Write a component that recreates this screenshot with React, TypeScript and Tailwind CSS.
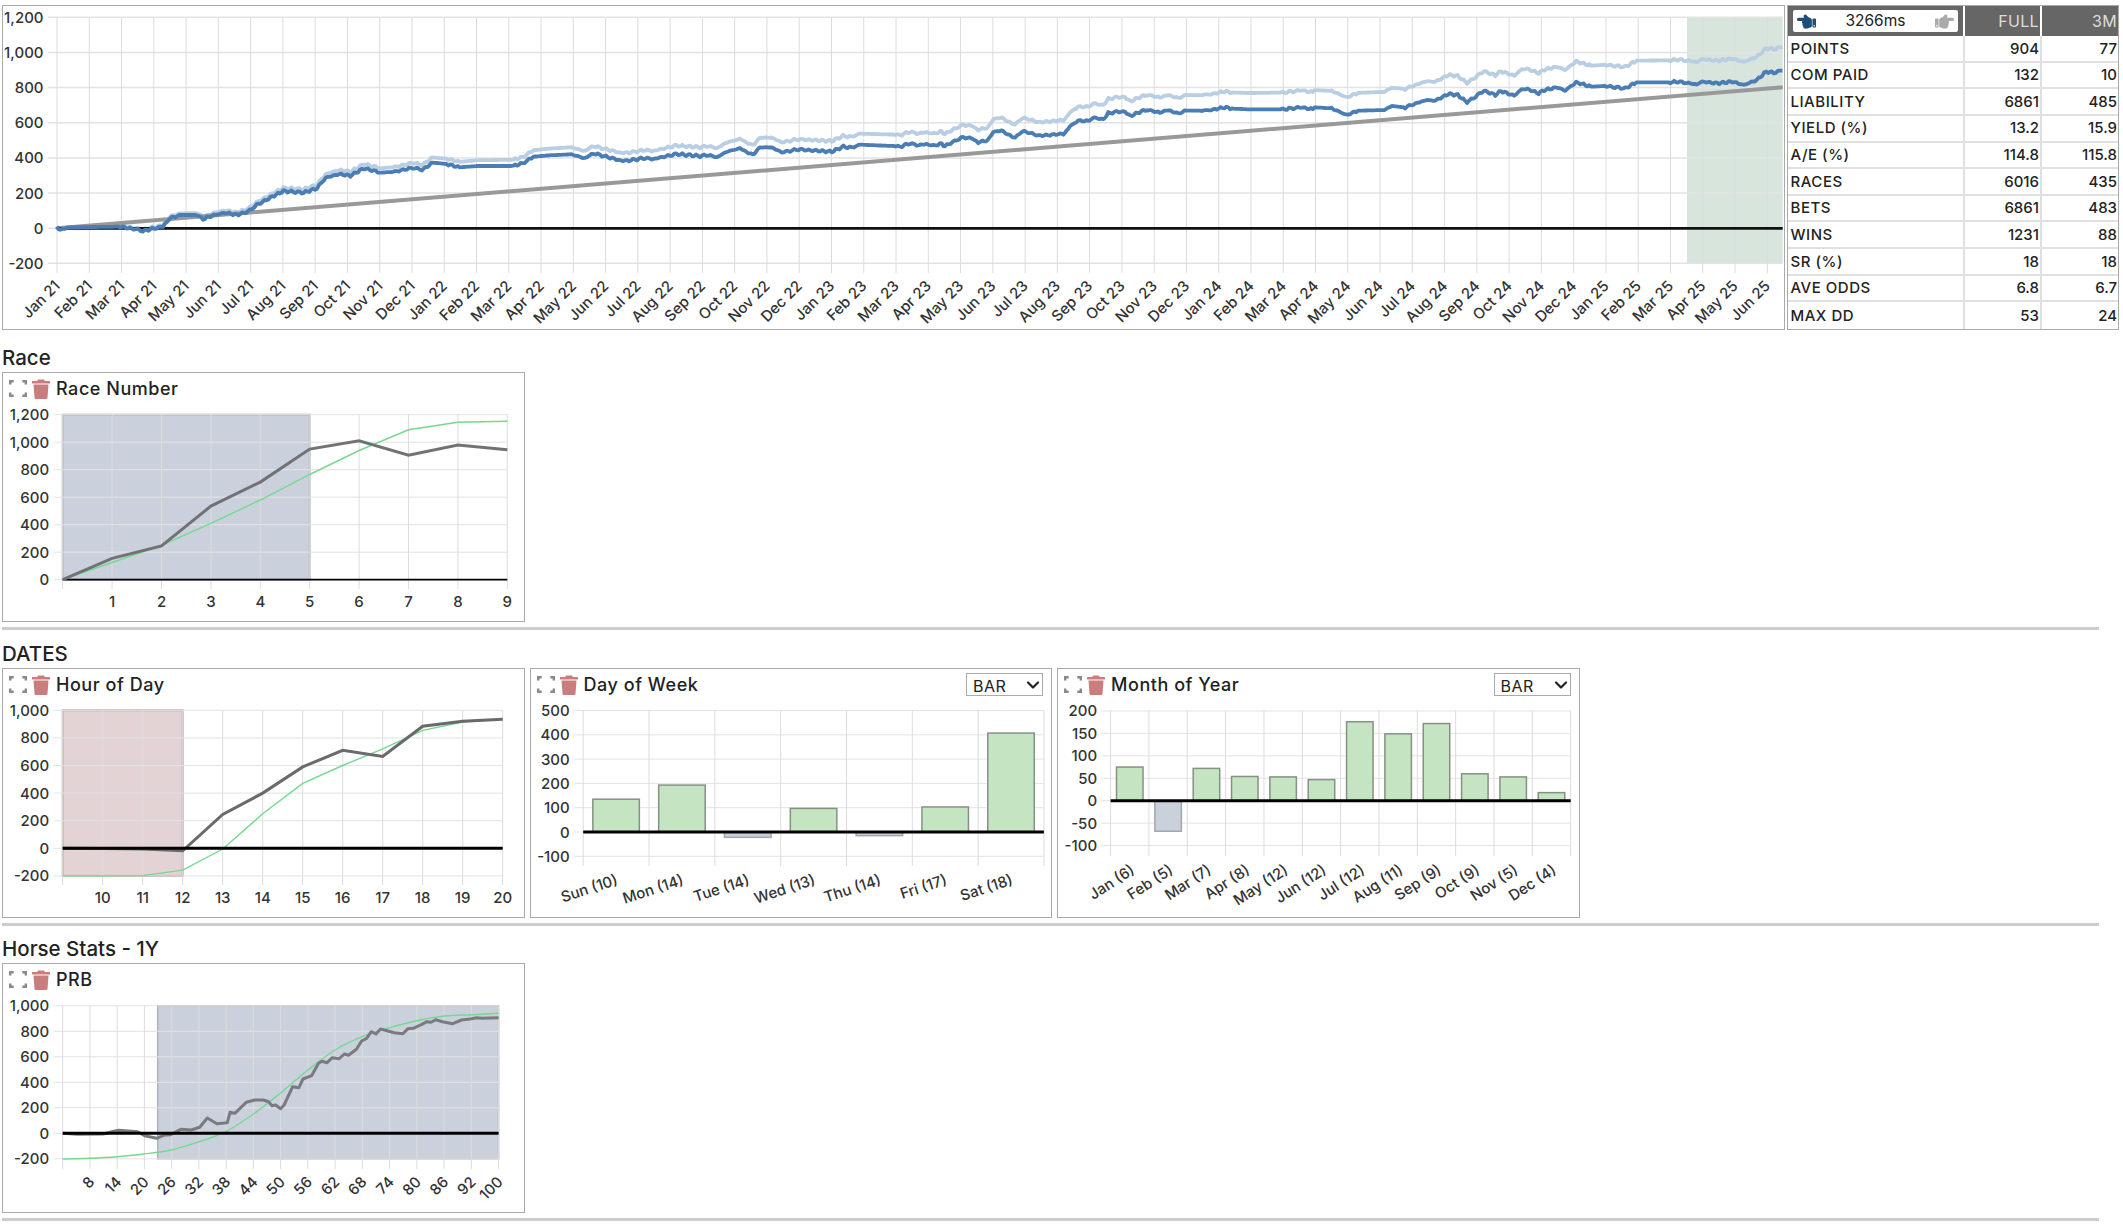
import React from "react";
import { FaHandPointLeft, FaHandPointRight } from "react-icons/fa";
import { ChevronDown } from "lucide-react";

type P = [number, number];

const GRID = "#e3e3e3";
const TXT = "#333";

function line(pts: P[]) {
  return pts.map((p) => `${p[0].toFixed(1)},${p[1].toFixed(1)}`).join(" ");
}

function smooth(pts: P[]) {
  let d = `M${pts[0][0]} ${pts[0][1]}`;
  for (let i = 0; i < pts.length - 1; i++) {
    const p0 = pts[Math.max(0, i - 1)];
    const p1 = pts[i];
    const p2 = pts[i + 1];
    const p3 = pts[Math.min(pts.length - 1, i + 2)];
    const c1: P = [p1[0] + (p2[0] - p0[0]) / 6, p1[1] + (p2[1] - p0[1]) / 6];
    const c2: P = [p2[0] - (p3[0] - p1[0]) / 6, p2[1] - (p3[1] - p1[1]) / 6];
    d += ` C${c1[0].toFixed(1)} ${c1[1].toFixed(1)} ${c2[0].toFixed(1)} ${c2[1].toFixed(1)} ${p2[0].toFixed(1)} ${p2[1].toFixed(1)}`;
  }
  return d;
}

type AxesProps = {
  left: number;
  right: number;
  ys: number[];
  ylabels: string[];
  xs: number[];
  top: number;
  tickEnd: number;
  hw?: number;
};

function Axes({ left, right, ys, ylabels, xs, top, tickEnd, hw = 1 }: AxesProps) {
  return (
    <g>
      {ys.map((y, i) => (
        <g key={i}>
          <line x1={left - 9} x2={right} y1={y} y2={y} stroke={GRID} strokeWidth={hw} />
          <text x={left - 13.5} y={y} textAnchor="end" dominantBaseline="central" fontSize={15} fontWeight={500} fill={TXT}>
            {ylabels[i]}
          </text>
        </g>
      ))}
      {xs.map((x, i) => (
        <line key={i} x1={x} x2={x} y1={top} y2={tickEnd} stroke="#dcdcdc" strokeWidth={1} />
      ))}
    </g>
  );
}

function Labels({ items, rot, size = 15 }: { items: { x: number; y: number; t: string }[]; rot: number; size?: number }) {
  return (
    <g>
      {items.map((l, i) => (
        <text
          key={i}
          x={l.x}
          y={l.y}
          fontSize={size}
          fontWeight={500}
          fill={TXT}
          dominantBaseline="central"
          textAnchor={rot === 0 ? "middle" : "end"}
          transform={rot === 0 ? undefined : `rotate(${rot} ${l.x} ${l.y})`}
        >
          {l.t}
        </text>
      ))}
    </g>
  );
}

function ExpandIcon() {
  return (
    <svg width="18" height="17" viewBox="0 0 18 17" className="shrink-0" fill="none" stroke="#858a90" strokeWidth="2.4">
      <path d="M1.2 4.5V1.2h3.5M13.3 1.2h3.5v3.3M16.8 12.5v3.3h-3.5M4.7 15.8H1.2v-3.3" />
    </svg>
  );
}

function TrashIcon() {
  return (
    <svg width="18" height="20" viewBox="0 0 18 20" className="shrink-0 ml-[5px]" fill="#c97d7d">
      <path d="M6 0.5h6l1 2H5z" />
      <rect x="0" y="2" width="18" height="2.5" rx="0.6" />
      <path d="M1.5 5.5h15l-1 13.2a1.3 1.3 0 0 1-1.3 1.3H3.8a1.3 1.3 0 0 1-1.3-1.3z" />
    </svg>
  );
}

function Panel({
  title,
  px,
  py,
  select,
  children,
}: {
  title: string;
  px: number;
  py: number;
  select?: boolean;
  children: React.ReactNode;
}) {
  return (
    <div className="w-[522.5px] h-[250px] shrink-0 border border-[#aaa] bg-white">
      <div className="flex items-center h-[33px] pb-[2px] pl-[6px] pr-[8px]">
        <ExpandIcon />
        <TrashIcon />
        <span className="ml-[6px] text-[18px] font-medium tracking-[0.03em] text-[#222]">{title}</span>
        {select && (
          <div className="ml-auto relative w-[77px] h-[23px]">
            <select className="appearance-none w-full h-full border border-[#aaa] bg-white pl-[6px] text-[16px] text-[#222] tracking-[0.03em]" defaultValue="BAR">
              <option>BAR</option>
              <option>LINE</option>
            </select>
            <ChevronDown size={20} strokeWidth={2.6} className="absolute right-0 top-[2px] text-[#222] pointer-events-none" />
          </div>
        )}
      </div>
      <svg width="520" height="215" viewBox={`${px + 1} ${py + 34} 520 215`} className="block">
        {children}
      </svg>
    </div>
  );
}

function Section({ title, cls, children }: { title: string; cls: string; children: React.ReactNode }) {
  return (
    <section className={cls}>
      <h2 className="h-[37px] flex items-end pb-[4px] pl-[2px] text-[20.5px] leading-[20px] font-medium text-[#222]">{title}</h2>
      <div className="flex gap-[5px] pl-[2px]">{children}</div>
      <div className="ml-[2px] mt-[5px] w-[2097px] h-[3px] bg-[#ccc]" />
    </section>
  );
}

/* ---------- main equity chart ---------- */
const z1: P[] = [[127,680],[135,690],[155,682],[270,680],[300,687],[320,693],[345,685],[365,680],[380,655],[405,645],[440,645],[455,657],[480,645],[505,638],[530,645],[555,635],[575,615],[610,590],[635,573],[680,578],[710,565],[730,533],[760,522],[785,527],[815,505],[855,518],[885,515],[925,503],[945,510],[970,488],[1000,492],[1030,502],[1070,498],[1150,498],[1175,488],[1195,470],[1230,466],[1280,463],[1310,475],[1330,460],[1380,478],[1400,483],[1445,474],[1460,478],[1515,462],[1568,468]];
const z10: P[] = [[25,345],[50,352],[80,335],[120,325],[158,345],[180,322],[215,322],[245,337],[295,328],[320,330],[395,335],[430,320],[455,323],[480,314],[580,318],[600,320],[630,310],[650,316],[680,312],[700,318],[720,310],[735,318],[770,300],[790,292],[815,295],[835,307],[865,300],[880,275],[905,272],[935,290],[945,292],[965,275],[985,277],[1015,287],[1050,285],[1080,282],[1095,280],[1110,258],[1135,242],[1165,243],[1180,233],[1210,238],[1225,220],[1250,215],[1275,215],[1290,228],[1330,212],[1345,210],[1380,218],[1400,210],[1435,220],[1460,212],[1500,212]];
const z11: P[] = [[30,240],[65,232],[90,236],[130,238],[220,238],[270,232],[300,238],[305,232],[350,235],[390,255],[420,242],[490,240],[510,228],[545,232],[600,210],[625,212],[660,192],[685,195],[710,217],[755,182],[785,195],[800,183],[835,197],[855,178],[870,177],[900,190],[915,180],[950,172],[970,182],[1000,157],[1040,170],[1075,168],[1130,175],[1160,157],[1250,157],[1270,155],[1320,163],[1335,155],[1375,160],[1415,155],[1445,165],[1480,150],[1505,125],[1525,128],[1548,122]];

const mainKeys: P[] = [
  ...z1.map((p): P => [p[0] / 2.24, p[1] / 3]),
  ...z10.map((p): P => [700 + p[0] / 3, 40 + p[1] / 3]),
  ...z11.map((p): P => [1200 + p[0] / 2.658, 30 + p[1] / 3]),
];

function buildMain() {
  const out: P[] = [];
  for (let i = 0; i < mainKeys.length - 1; i++) {
    const a = mainKeys[i];
    const b = mainKeys[i + 1];
    const n = Math.max(1, Math.round((b[0] - a[0]) / 2));
    const flat = Math.abs(b[1] - a[1]) < 1.6 && b[0] - a[0] > 12;
    for (let j = 0; j < n; j++) {
      const x = a[0] + ((b[0] - a[0]) * j) / n;
      const y = a[1] + ((b[1] - a[1]) * j) / n;
      const noise = flat ? 0 : Math.sin(x * 0.9) * 0.7 + Math.sin(x * 2.3) * 0.5;
      out.push([x, y + noise]);
    }
  }
  out.push(mainKeys[mainKeys.length - 1]);
  return out;
}
const mainDark = buildMain();
const mainLight: P[] = mainDark.map((p): P => [p[0], p[1] - ((p[0] - 57) / 1725.7) * 23.6]);

const MONTHS = ["Jan","Feb","Mar","Apr","May","Jun","Jul","Aug","Sep","Oct","Nov","Dec"];
const mainTicks: { x: number; tick: number; y: number; t: string }[] = [];
for (let i = 0; i < 54; i++) {
  const tick = 57 + i * 32.27;
  mainTicks.push({ tick, x: tick, y: 283, t: `${MONTHS[i % 12]} ${21 + Math.floor(i / 12)}` });
}

function MainChart() {
  const ys = [0, 1, 2, 3, 4, 5, 6, 7].map((i) => 17.3 + i * 35.15);
  const xs = mainTicks.map((t) => t.tick);
  return (
    <svg width="1781" height="323" viewBox="3 6 1781 323" className="block">
      <rect x={1687} y={17.3} width={95.7} height={246} fill="#d8e5dd" />
      <Axes left={57} right={1782.7} ys={ys} ylabels={["1,200","1,000","800","600","400","200","0","-200"]} xs={xs} top={17.3} tickEnd={273} hw={1.5} />
      <Labels items={mainTicks} rot={-45} />
      <polyline points={line(mainLight)} fill="none" stroke="#b9cde3" strokeWidth={3.8} strokeLinejoin="round" />
      <line x1={57} y1={228.3} x2={1782.7} y2={87.3} stroke="#999" strokeWidth={4} />
      <line x1={57} y1={228.3} x2={1782.7} y2={228.3} stroke="#111" strokeWidth={2.8} />
      <polyline points={line(mainDark)} fill="none" stroke="#4a7db3" strokeWidth={3.8} strokeLinejoin="round" />
    </svg>
  );
}

/* ---------- stats table ---------- */
const STATS: [string, string, string][] = [
  ["POINTS","904","77"],["COM PAID","132","10"],["LIABILITY","6861","485"],["YIELD (%)","13.2","15.9"],
  ["A/E (%)","114.8","115.8"],["RACES","6016","435"],["BETS","6861","483"],["WINS","1231","88"],
  ["SR (%)","18","18"],["AVE ODDS","6.8","6.7"],["MAX DD","53","24"],
];

function StatsTable() {
  return (
    <div className="ml-[2px] w-[332px] h-[325px] border border-[#aaa] grid grid-cols-[177px_77px_76px] grid-rows-[30px_repeat(11,1fr)] text-[15px] font-medium text-[#222]">
      <div className="bg-[#666] border-r-2 border-white p-[4px_5px] flex">
        <div className="flex-1 bg-white rounded-[2px] flex items-center justify-between px-[4px]">
          <FaHandPointLeft className="text-[#1f4e79] text-[19px]" />
          <span className="font-normal text-[15.5px] text-[#222]">3266ms</span>
          <FaHandPointRight className="text-[#aaa] text-[19px]" />
        </div>
      </div>
      <div className="bg-[#666] border-r-2 border-white text-[#ddd] text-[16px] tracking-[0.02em] font-normal text-right pr-[1px] leading-[30px]">FULL</div>
      <div className="bg-[#666] text-[#ddd] text-[16px] tracking-[0.02em] font-normal text-right pr-[1px] leading-[30px]">3M</div>
      {STATS.map((r, i) => (
        <React.Fragment key={r[0]}>
          <div className={`border-r-2 border-[#e0e0e0] pl-[2.5px] pt-[1px] flex items-center tracking-[0.035em] ${i < 10 ? "border-b-2" : ""}`}>{r[0]}</div>
          <div className={`border-r-2 border-[#e0e0e0] pr-[1px] pt-[1px] flex items-center justify-end ${i < 10 ? "border-b-2" : ""}`}>{r[1]}</div>
          <div className={`border-[#e0e0e0] pr-[1px] pt-[1px] flex items-center justify-end ${i < 10 ? "border-b-2" : ""}`}>{r[2]}</div>
        </React.Fragment>
      ))}
    </div>
  );
}

/* ---------- race number ---------- */
function RaceChart() {
  const X = (i: number) => 62.7 + i * 49.4;
  const Y = (v: number) => 579.7 - (v / 200) * 27.5;
  const ys = [1200,1000,800,600,400,200,0].map(Y);
  const xs = [0,1,2,3,4,5,6,7,8,9].map(X);
  const dark = [0,155,245,535,710,950,1010,905,980,945].map((v, i): P => [X(i), Y(v)]);
  const green = [0,125,250,410,580,765,940,1090,1145,1152].map((v, i): P => [X(i), Y(v)]);
  return (
    <>
      <rect x={X(0)} y={Y(1200)} width={X(5) - X(0)} height={Y(0) - Y(1200)} fill="#cbd1dc" stroke="#b0b4ba" strokeWidth={2} />
      <Axes left={62.7} right={507.3} ys={ys} ylabels={["1,200","1,000","800","600","400","200","0"]} xs={xs} top={Y(1200)} tickEnd={589} />
      <Labels items={xs.slice(1).map((x, i) => ({ x, y: 601.7, t: String(i + 1) }))} rot={0} />
      <polyline points={line(green)} fill="none" stroke="#74d98f" strokeWidth={1.4} />
      <line x1={X(0)} x2={X(9)} y1={Y(0)} y2={Y(0)} stroke="#000" strokeWidth={1.8} />
      <polyline points={line(dark)} fill="none" stroke="#727276" strokeWidth={3} />
    </>
  );
}

/* ---------- hour of day ---------- */
function HourChart() {
  const X = (i: number) => 62.7 + i * 40;
  const Y = (v: number) => 848.3 - (v / 200) * 27.6;
  const ys = [1000,800,600,400,200,0,-200].map(Y);
  const xs = [0,1,2,3,4,5,6,7,8,9,10,11].map(X);
  const dark = [0,-2,-5,-18,245,400,590,710,665,885,920,935].map((v, i): P => [X(i), Y(v)]);
  const green = [-200,-200,-198,-158,-5,250,470,600,720,855,915,935].map((v, i): P => [X(i), Y(v)]);
  return (
    <>
      <rect x={X(0)} y={Y(1000)} width={X(3) - X(0)} height={Y(-200) - Y(1000)} fill="#e4d3d5" stroke="#b8abac" strokeWidth={2} />
      <Axes left={62.7} right={502.7} ys={ys} ylabels={["1,000","800","600","400","200","0","-200"]} xs={xs} top={Y(1000)} tickEnd={885} />
      <Labels items={xs.slice(1).map((x, i) => ({ x, y: 897, t: String(i + 10) }))} rot={0} />
      <polyline points={line(green)} fill="none" stroke="#74d98f" strokeWidth={1.4} />
      <polyline points={line(dark)} fill="none" stroke="#6a6a6a" strokeWidth={3} />
      <line x1={X(0)} x2={X(11)} y1={Y(0)} y2={Y(0)} stroke="#000" strokeWidth={3} />
    </>
  );
}

/* ---------- bars ---------- */
function BarChart({
  left, step, n, barW, zero, per, top, tickEnd, right, yvals, values, labels, labelY, labelDx, rot,
}: {
  left: number; step: number; n: number; barW: number; zero: number; per: number; top: number; tickEnd: number; right: number;
  yvals: number[]; values: number[]; labels: string[]; labelY: number; labelDx: number; rot: number;
}) {
  const xs = Array.from({ length: n + 1 }, (_, i) => left + i * step);
  return (
    <>
      <Axes left={left} right={right} ys={yvals.map((v) => zero - v * per)} ylabels={yvals.map(String)} xs={xs} top={top} tickEnd={tickEnd} />
      {values.map((v, i) => {
        const c = left + (i + 0.5) * step;
        const y = v >= 0 ? zero - v * per : zero;
        return (
          <rect key={i} x={c - barW / 2} y={y} width={barW} height={Math.abs(v) * per} fill={v >= 0 ? "#c5e5c2" : "#cbd1dc"} stroke={v >= 0 ? "#859185" : "#a2a5ac"} strokeWidth={1.5} />
        );
      })}
      <line x1={left} x2={right} y1={zero} y2={zero} stroke="#000" strokeWidth={3} />
      <Labels items={labels.map((t, i) => ({ x: left + (i + 0.5) * step + labelDx, y: labelY, t }))} rot={rot} />
    </>
  );
}

/* ---------- PRB ---------- */
const prbDarkZ: P[] = [[182,610],[225,613],[300,612],[330,604],[345,601],[400,605],[420,617],[455,625],[475,616],[495,614],[525,598],[555,600],[580,592],[602,564],[630,581],[660,578],[668,547],[682,550],[715,517],[740,510],[765,510],[780,515],[790,527],[800,525],[815,536],[825,525],[850,470],[868,473],[880,447],[905,437],[925,400],[935,394],[950,398],[965,383],[985,386],[1000,372],[1012,376],[1035,358],[1050,333],[1065,325],[1078,305],[1092,312],[1105,297],[1145,308],[1170,311],[1185,296],[1200,295],[1225,283],[1240,275],[1252,277],[1265,269],[1285,275],[1315,281],[1340,270],[1365,267],[1385,263],[1400,265],[1448,263]];
const prbGreenZ: P[] = [[182,687],[260,685],[341,680],[418,672],[497,660],[579,635],[657,604],[736,552],[816,488],[894,420],[973,360],[1052,320],[1132,293],[1210,272],[1291,258],[1370,254],[1448,250]];
const toPage = (p: P): P => [p[0] / 2.904, 930 + p[1] / 3];

function PrbChart() {
  const X = (i: number) => 62.7 + i * 27.24;
  const Y = (v: number) => 1133.3 - (v / 200) * 25.5;
  const ys = [1000,800,600,400,200,0,-200].map(Y);
  const xs = Array.from({ length: 17 }, (_, i) => X(i));
  const labels = ["8","14","20","26","32","38","44","50","56","62","68","74","80","86","92","100"];
  return (
    <>
      <rect x={157.7} y={Y(1000)} width={498.6 - 157.7} height={Y(-200) - Y(1000)} fill="#cbd1dc" stroke="#b0b4ba" strokeWidth={1.5} />
      <Axes left={62.7} right={498.6} ys={ys} ylabels={["1,000","800","600","400","200","0","-200"]} xs={xs} top={Y(1000)} tickEnd={1169} />
      <Labels items={labels.map((t, i) => ({ x: X(i + 1) + 1.5, y: 1179, t }))} rot={-45} />
      <path d={smooth(prbGreenZ.map(toPage))} fill="none" stroke="#74d98f" strokeWidth={1.4} />
      <polyline points={line(prbDarkZ.map(toPage))} fill="none" stroke="#7a7a80" strokeWidth={3} strokeLinejoin="round" />
      <line x1={62.7} x2={498.6} y1={Y(0)} y2={Y(0)} stroke="#000" strokeWidth={3} />
    </>
  );
}

export default function App() {
  return (
    <div className="w-[2123px] min-h-[1228px] bg-white pt-[5px] [font-family:Inter,sans-serif]">
      <div className="flex pl-[2px]">
        <div className="w-[1783px] h-[325px] border border-[#aaa]">
          <MainChart />
        </div>
        <StatsTable />
      </div>

      <Section title="Race" cls="mt-[5px]">
        <Panel title="Race Number" px={2} py={372}>
          <RaceChart />
        </Panel>
      </Section>

      <Section title="DATES" cls="mt-[1px]">
        <Panel title="Hour of Day" px={2} py={668}>
          <HourChart />
        </Panel>
        <Panel title="Day of Week" px={529.5} py={668} select>
          <BarChart
            left={582.7} step={65.82} n={7} barW={46.5} zero={832} per={0.243} top={710.7} tickEnd={866} right={1043.4}
            yvals={[500,400,300,200,100,0,-100]}
            values={[135,193,-22,97,-15,103,407]}
            labels={["Sun (10)","Mon (14)","Tue (14)","Wed (13)","Thu (14)","Fri (17)","Sat (18)"]}
            labelY={879} labelDx={1} rot={-18}
          />
        </Panel>
        <Panel title="Month of Year" px={1057} py={668} select>
          <BarChart
            left={1110.6} step={38.34} n={12} barW={26.5} zero={800.7} per={0.4487} top={710.7} tickEnd={856} right={1570.7}
            yvals={[200,150,100,50,0,-50,-100]}
            values={[75,-68,72,54,53,47,176,149,172,60,53,18]}
            labels={["Jan (6)","Feb (5)","Mar (7)","Apr (8)","May (12)","Jun (12)","Jul (12)","Aug (11)","Sep (9)","Oct (9)","Nov (5)","Dec (4)"]}
            labelY={868} labelDx={3} rot={-33}
          />
        </Panel>
      </Section>

      <Section title="Horse Stats - 1Y" cls="">
        <Panel title="PRB" px={2} py={963}>
          <PrbChart />
        </Panel>
      </Section>
    </div>
  );
}
